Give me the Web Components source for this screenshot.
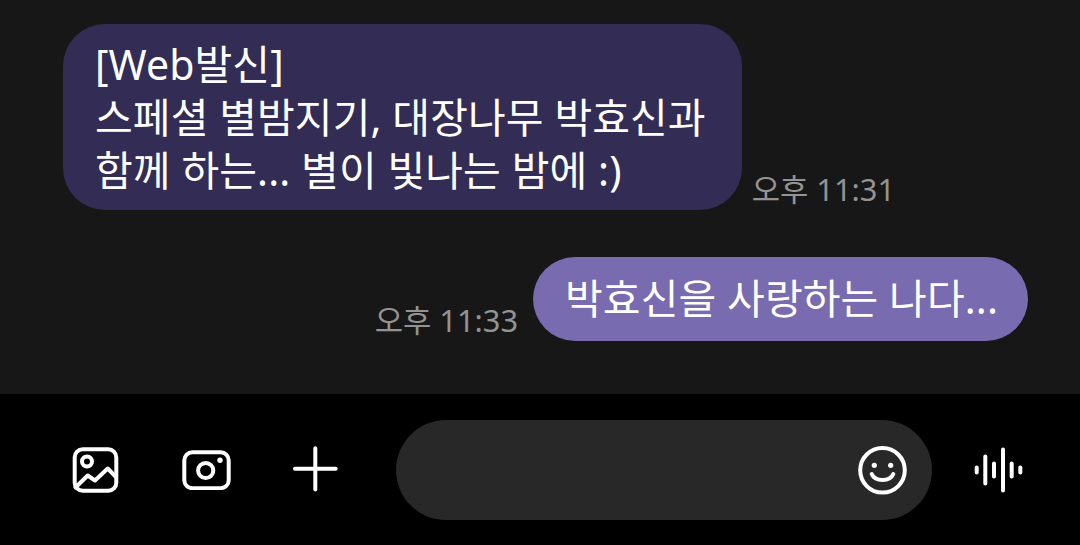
<!DOCTYPE html>
<html lang="ko">
<head>
<meta charset="utf-8">
<style>
  html, body { margin: 0; height: 100%; }
  body { background: #000; font-family: "Noto Sans", "Noto Sans CJK KR", sans-serif; overflow: hidden; }
</style>
</head>
<body>
<chat-screen>
  <chat-message kind="in" time="오후 11:31">[Web발신]<br>스페셜 별밤지기, 대장나무 박효신과<br>함께 하는... 별이 빛나는 밤에 :)</chat-message>
  <chat-message kind="out" time="오후 11:33">박효신을 사랑하는 나다...</chat-message>
  <chat-composer slot="composer"></chat-composer>
</chat-screen>

<script>
class ChatScreen extends HTMLElement {
  constructor() {
    super();
    const shadowRoot = this.attachShadow({ mode: 'open' });
    shadowRoot.innerHTML = `
      <style>
        :host { display: flex; flex-direction: column; width: 1080px; height: 545px; }
        .list {
          height: 394px;
          box-sizing: border-box;
          background: #171717;
          padding: 24px 52px 0 63px;
          display: flex;
          flex-direction: column;
          gap: 47px;
        }
      </style>
      <div class="list"><slot></slot></div>
      <slot name="composer"></slot>
    `;
  }
}

class ChatMessage extends HTMLElement {
  constructor() {
    super();
    const shadowRoot = this.attachShadow({ mode: 'open' });
    shadowRoot.innerHTML = `
      <style>
        :host { display: flex; align-items: flex-end; gap: 10px; color: #fff; }
        :host([kind="out"]) { flex-direction: row-reverse; gap: 15px; }
        .bubble {
          background: #332c55;
          border-radius: 42px;
          padding: 13.5px 36px 12.5px 32px;
          font-size: 41px;
          line-height: 53.33px;
          letter-spacing: 0.1px;
          white-space: nowrap;
        }
        :host([kind="out"]) .bubble {
          background: #786baf;
          padding: 15px 30px 15.6px 32px;
        }
        .time {
          color: #939393;
          font-size: 30.8px;
          line-height: 40px;
          white-space: nowrap;
          margin-bottom: 1px;
        }
      </style>
      <div class="bubble"><slot></slot></div>
      <div class="time">${this.getAttribute('time') || ''}</div>
    `;
  }
}

class ChatComposer extends HTMLElement {
  constructor() {
    super();
    const shadowRoot = this.attachShadow({ mode: 'open' });
    shadowRoot.innerHTML = `
      <style>
        :host { display: flex; align-items: center; height: 151px; background: #000; box-sizing: border-box; padding-left: 71px; }
        svg { display: block; fill: none; stroke: #fff; stroke-width: 4; stroke-linecap: round; stroke-linejoin: round; flex: none; }
        .icons { display: flex; align-items: center; gap: 62px; margin-top: -1px; }
        .input {
          width: 536px;
          height: 100px;
          margin-left: 58px;
          border-radius: 50px;
          background: #282828;
          display: flex;
          align-items: center;
          justify-content: flex-end;
          padding-right: 24px;
          box-sizing: border-box;
        }
        .voice { margin-left: 42px; margin-top: -1px; }
      </style>
      <div class="icons">
        <!-- gallery -->
        <svg width="48" height="48" viewBox="0 0 48 48">
          <rect x="3.7" y="4.2" width="41.6" height="41.6" rx="8"/>
          <circle cx="16" cy="16.5" r="5"/>
          <path d="M4.5 42.5 L16.7 30.5 L24 35.5 L36.7 23.5 L45 32"/>
        </svg>
        <!-- camera -->
        <svg width="50" height="42" viewBox="0 0 50 42">
          <rect x="3.3" y="4.2" width="44.4" height="36" rx="8"/>
          <circle cx="24.7" cy="22.5" r="7.6"/>
          <circle cx="39" cy="12.2" r="2.7" fill="#fff" stroke="none"/>
        </svg>
        <svg style="margin-left:-1px" width="46" height="48" viewBox="0 0 46 48">
          <path d="M23.3 3.2V44.5M3 23.8H43.7"/>
        </svg>
      </div>
      <div class="input">
        <!-- emoji -->
        <svg width="50" height="50" viewBox="0 0 50 50">
          <circle cx="24.5" cy="25.3" r="22.3"/>
          <circle cx="16.3" cy="20.3" r="2.6" fill="#fff" stroke="none"/>
          <circle cx="32.7" cy="20.3" r="2.6" fill="#fff" stroke="none"/>
          <path d="M13.7 29 C17 37, 32 37, 35.3 29"/>
        </svg>
      </div>
      <!-- voice -->
      <svg class="voice" width="50" height="50" viewBox="0 0 50 50">
        <path d="M2.7 23.5V28.5M11.3 12.5V39.5M20 19.5V32.5M29 5.5V46.5M37.7 19.5V32.5M46.3 23.5V28.5"/>
      </svg>
    `;
  }
}

customElements.define('chat-screen', ChatScreen);
customElements.define('chat-message', ChatMessage);
customElements.define('chat-composer', ChatComposer);
</script>
</body>
</html>
